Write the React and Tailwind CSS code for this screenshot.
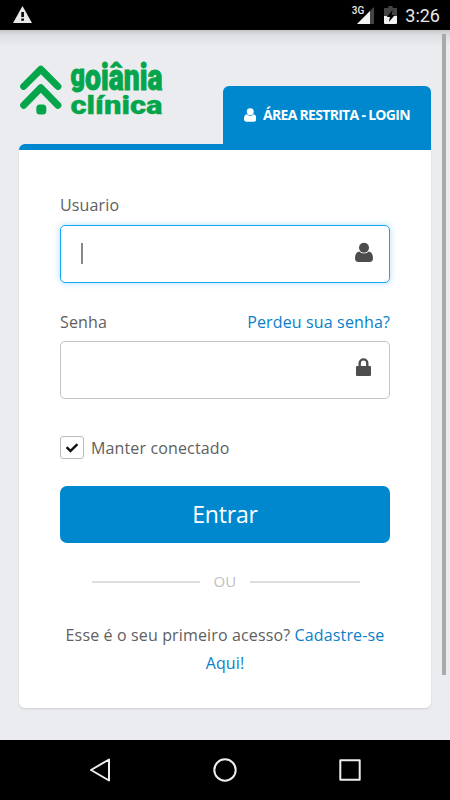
import React, { useState } from 'react';
import { FaCheck } from 'react-icons/fa';

const UserIcon = ({ className }) => (
  <svg viewBox="0 0 18 20" className={className} fill="currentColor">
    <circle cx="9" cy="5.2" r="5" />
    <path d="M4.2 9C1.2 9.4 0 12.4 0 16c0 2.2 1.3 3.6 3.3 3.6h11.4c2 0 3.3-1.4 3.3-3.6 0-3.6-1.2-6.6-4.2-7a7 7 0 0 1-9.6 0z" />
  </svg>
);

const LockIcon = ({ className }) => (
  <svg viewBox="0 0 15 18" className={className} fill="currentColor">
    <path d="M1 8h1.5V5.2a5 5 0 0 1 10 0V8H14a1 1 0 0 1 1 1v8a1 1 0 0 1-1 1H1a1 1 0 0 1-1-1V9a1 1 0 0 1 1-1zm3.9 0h5.2V5.2a2.6 2.6 0 0 0-5.2 0z" />
  </svg>
);

const Logo = () => (
  <svg width="150" height="56" viewBox="0 0 150 56" className="overflow-visible text-[#05a54b]" fill="currentColor">
    <g fill="none" stroke="currentColor" strokeWidth="7" strokeLinecap="round" strokeLinejoin="round">
      <path d="M4.7 25.4 L21.8 8.2 L38.9 25.4" />
      <path d="M4.7 44.2 L21.8 26.8 L38.9 44.2" />
    </g>
    <rect x="17.3" y="43.5" width="10" height="10" rx="3.5" />
    <g fontFamily="Roboto, sans-serif" fontWeight="900" stroke="currentColor">
      <text x="51.5" y="28.8" textLength="92" lengthAdjust="spacingAndGlyphs" fontSize="36" strokeWidth="0.9">
        <tspan fontSize="32" dy="-4">g</tspan>
        <tspan dy="4">oiânia</tspan>
      </text>
      <text x="51.5" y="52.6" textLength="92" lengthAdjust="spacingAndGlyphs" fontSize="25.5" strokeWidth="0.3">clínica</text>
    </g>
  </svg>
);

const StatusBar = () => (
  <header className="flex h-[30px] shrink-0 items-center bg-black pl-[13px] pr-[10px] font-[Roboto,sans-serif] text-[#e8e8e8]">
    <svg width="19" height="17" viewBox="0 0 19 17" className="-translate-y-px">
      <path d="M9.5 0 L19 17 H0z" fill="#e8e8e8" />
      <path d="M8.3 6h2.6v5H8.3zM8.3 12.5h2.6v2.3H8.3z" fill="#000" />
    </svg>
    <div className="ml-auto flex items-center">
      <span className="-mr-[7px] -mt-[8px] text-[10px] font-medium leading-none">3G</span>
      <svg width="17" height="17" viewBox="0 0 17 17">
        <path d="M17 0 V17 H0z" fill="#444" />
        <path d="M13 4 V17 H0z" fill="#f2f2f2" />
      </svg>
      <svg width="13" height="18" viewBox="0 0 12 18" preserveAspectRatio="none" className="ml-[10px]">
        <path d="M4 0h4v2h4v8H0V2h4z" fill="#444" />
        <path d="M0 10h12v7a1 1 0 0 1-1 1H1a1 1 0 0 1-1-1z" fill="#f2f2f2" />
        <path d="M8 4 L2.5 11h3L4.5 16 L10 9H7z" fill="#000" />
      </svg>
      <span className="ml-[8px] translate-y-px text-[18px] leading-none">3:26</span>
    </div>
  </header>
);

const NavBar = () => (
  <nav className="flex h-[60px] shrink-0 items-center justify-center gap-[101px] bg-black text-[#eee]">
    <svg width="24" height="24" viewBox="0 0 24 24" fill="none" stroke="currentColor" strokeWidth="2" strokeLinejoin="round">
      <path d="M21 1.5 V22.5 L3 12z" />
    </svg>
    <svg width="24" height="24" viewBox="0 0 24 24" fill="none" stroke="currentColor" strokeWidth="2">
      <circle cx="12" cy="12" r="10.7" />
    </svg>
    <svg width="24" height="24" viewBox="0 0 24 24" fill="none" stroke="currentColor" strokeWidth="2" strokeLinejoin="round">
      <rect x="2.3" y="2.3" width="19.4" height="19.4" />
    </svg>
  </nav>
);

const App = () => {
  const [keep, setKeep] = useState(true);

  return (
    <div className="flex h-[800px] w-[450px] flex-col overflow-hidden bg-[#ebecf0] font-['Open_Sans',sans-serif] text-[16px] text-[#606060]">
      <StatusBar />

      <main className="relative flex-1 bg-[linear-gradient(#c6c7ca_0,#dddee1_5px,#ebecf0_16px)] px-[19px] pt-[31px]">
        <div className="flex">
          <Logo />
          <div className="ml-auto mt-[25px] flex h-[58px] w-[208.5px] items-center rounded-t-[6px] bg-[#0088cf] pl-[21px] text-[14px] font-bold text-white">
            <UserIcon className="mr-[7px] h-[14px] w-[12.5px]" />
            <span className="-translate-y-px whitespace-nowrap tracking-[-0.7px]">ÁREA RESTRITA - LOGIN</span>
          </div>
        </div>

        <form className="flex h-[563.5px] flex-col rounded-b-[6px] rounded-tl-[6px] border-t-[6px] border-[#0088cf] bg-white px-[41px] pt-[43px] tracking-[0.14px] shadow-[0_1px_2px_rgba(0,0,0,0.12)]">
          <label className="h-[32px] leading-[25px]">Usuario</label>
          <div className="flex h-[57.5px] shrink-0 items-center justify-between rounded-[5px] border border-[#0fa8fa] pl-[20px] pr-[16px] shadow-[0_0_7px_rgba(0,136,204,0.3)]">
            <span className="h-[21px] w-[2px] bg-[#888]" />
            <UserIcon className="h-[20px] w-[18px] -translate-y-[1.5px] text-[#4d4d4d]" />
          </div>

          <div className="mt-[26.5px] flex h-[32px] justify-between leading-[26px]">
            <label>Senha</label>
            <a className="text-[#0a80c8]">Perdeu sua senha?</a>
          </div>
          <div className="flex h-[57.5px] shrink-0 items-center justify-end rounded-[5px] border border-[#c4c4c4] pr-[18px]">
            <LockIcon className="h-[18px] w-[15px] -translate-y-[3px] text-[#4d4d4d]" />
          </div>

          <label className="mt-[37px] flex h-[24px] items-center" onClick={() => setKeep(!keep)}>
            <span className="mr-[7px] flex h-[23px] w-[24px] items-center justify-center rounded-[3px] border border-[#bbb]">
              {keep && <FaCheck className="h-[12px] w-[12px] text-[#111]" />}
            </span>
            Manter conectado
          </label>

          <button type="button" className="mt-[26px] h-[57.5px] shrink-0 rounded-[7px] bg-[#0088cf] text-[23px] tracking-[-0.2px] text-white">
            Entrar
          </button>

          <div className="ml-[32px] mr-[30px] mt-[26.5px] flex h-[24px] items-center text-[15px] text-[#c0c0c0]">
            <span className="h-[2px] w-[108px] bg-[#dedede]" />
            <span className="flex-1 text-center">OU</span>
            <span className="h-[2px] w-[110px] bg-[#dedede]" />
          </div>

          <p className="-mx-2 mt-[27px] text-center leading-[28px]">
            Esse é o seu primeiro acesso? <a className="text-[#0a80c8]">Cadastre-se<br />Aqui!</a>
          </p>
        </form>

        {/* scrollbar */}
        <div className="absolute right-[4px] top-[4px] h-[641px] w-[4px] bg-[#a9aaac]" />
      </main>

      <NavBar />
    </div>
  );
};

export default App;
